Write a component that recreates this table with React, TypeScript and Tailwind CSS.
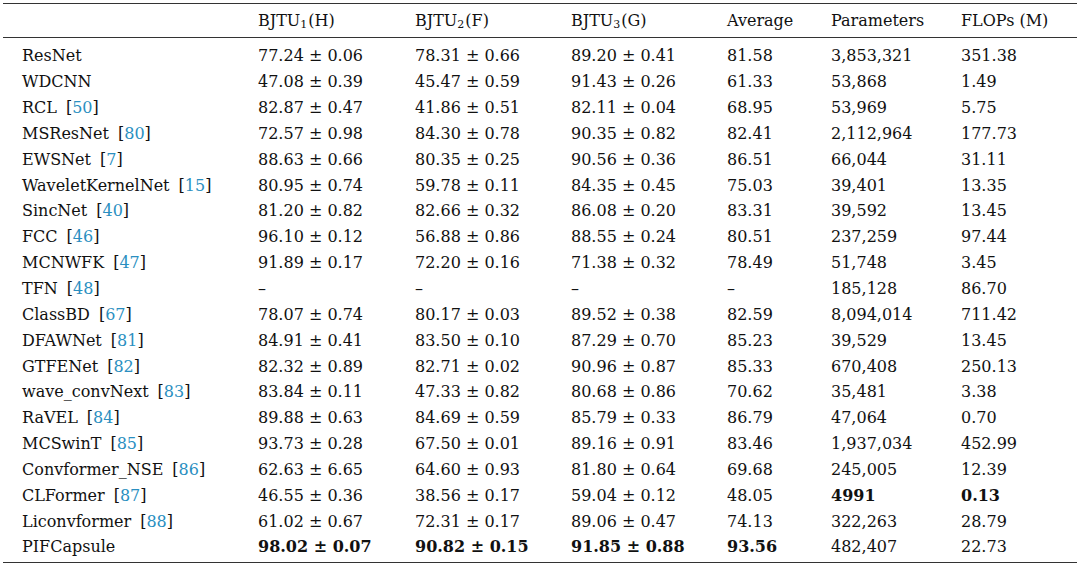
const rows: { name: string; ref?: string; cells: string[]; bold?: number[] }[] = [
  { name: 'ResNet', cells: ['77.24 ± 0.06', '78.31 ± 0.66', '89.20 ± 0.41', '81.58', '3,853,321', '351.38'] },
  { name: 'WDCNN', cells: ['47.08 ± 0.39', '45.47 ± 0.59', '91.43 ± 0.26', '61.33', '53,868', '1.49'] },
  { name: 'RCL', ref: '50', cells: ['82.87 ± 0.47', '41.86 ± 0.51', '82.11 ± 0.04', '68.95', '53,969', '5.75'] },
  { name: 'MSResNet', ref: '80', cells: ['72.57 ± 0.98', '84.30 ± 0.78', '90.35 ± 0.82', '82.41', '2,112,964', '177.73'] },
  { name: 'EWSNet', ref: '7', cells: ['88.63 ± 0.66', '80.35 ± 0.25', '90.56 ± 0.36', '86.51', '66,044', '31.11'] },
  { name: 'WaveletKernelNet', ref: '15', cells: ['80.95 ± 0.74', '59.78 ± 0.11', '84.35 ± 0.45', '75.03', '39,401', '13.35'] },
  { name: 'SincNet', ref: '40', cells: ['81.20 ± 0.82', '82.66 ± 0.32', '86.08 ± 0.20', '83.31', '39,592', '13.45'] },
  { name: 'FCC', ref: '46', cells: ['96.10 ± 0.12', '56.88 ± 0.86', '88.55 ± 0.24', '80.51', '237,259', '97.44'] },
  { name: 'MCNWFK', ref: '47', cells: ['91.89 ± 0.17', '72.20 ± 0.16', '71.38 ± 0.32', '78.49', '51,748', '3.45'] },
  { name: 'TFN', ref: '48', cells: ['–', '–', '–', '–', '185,128', '86.70'] },
  { name: 'ClassBD', ref: '67', cells: ['78.07 ± 0.74', '80.17 ± 0.03', '89.52 ± 0.38', '82.59', '8,094,014', '711.42'] },
  { name: 'DFAWNet', ref: '81', cells: ['84.91 ± 0.41', '83.50 ± 0.10', '87.29 ± 0.70', '85.23', '39,529', '13.45'] },
  { name: 'GTFENet', ref: '82', cells: ['82.32 ± 0.89', '82.71 ± 0.02', '90.96 ± 0.87', '85.33', '670,408', '250.13'] },
  { name: 'wave_convNext', ref: '83', cells: ['83.84 ± 0.11', '47.33 ± 0.82', '80.68 ± 0.86', '70.62', '35,481', '3.38'] },
  { name: 'RaVEL', ref: '84', cells: ['89.88 ± 0.63', '84.69 ± 0.59', '85.79 ± 0.33', '86.79', '47,064', '0.70'] },
  { name: 'MCSwinT', ref: '85', cells: ['93.73 ± 0.28', '67.50 ± 0.01', '89.16 ± 0.91', '83.46', '1,937,034', '452.99'] },
  { name: 'Convformer_NSE', ref: '86', cells: ['62.63 ± 6.65', '64.60 ± 0.93', '81.80 ± 0.64', '69.68', '245,005', '12.39'] },
  { name: 'CLFormer', ref: '87', cells: ['46.55 ± 0.36', '38.56 ± 0.17', '59.04 ± 0.12', '48.05', '4991', '0.13'], bold: [4, 5] },
  { name: 'Liconvformer', ref: '88', cells: ['61.02 ± 0.67', '72.31 ± 0.17', '89.06 ± 0.47', '74.13', '322,263', '28.79'] },
  { name: 'PIFCapsule', cells: ['98.02 ± 0.07', '90.82 ± 0.15', '91.85 ± 0.88', '93.56', '482,407', '22.73'], bold: [0, 1, 2, 3] },
]

const grid = 'grid grid-cols-[236px_157px_156px_156px_104px_130px_1fr] pl-[19px]'

function Bjtu({ n, k }: { n: string; k: string }) {
  return (
    <span>
      BJTU<sub className="text-[11px] relative top-[2px] mr-[1px]">{n}</sub>({k})
    </span>
  )
}

export default function App() {
  return (
    <div className="w-[1080px] h-[568px] bg-white pt-[3px] text-[16px] text-[#111] font-['DejaVu_Serif',serif]">
      <div className="mx-[3px] border-t-[1.5px] border-b-[1.5px] border-[#333]">
        <div className={`${grid} h-[34px] items-center border-b-[1.5px] border-[#333]`}>
          <div />
          <div><Bjtu n="1" k="H" /></div>
          <div><Bjtu n="2" k="F" /></div>
          <div><Bjtu n="3" k="G" /></div>
          <div>Average</div>
          <div>Parameters</div>
          <div>FLOPs (M)</div>
        </div>
        <div className="pt-[5.5px] pb-[1.5px]">
          {rows.map((r) => (
            <div key={r.name} className={`${grid} h-[25.85px] items-center leading-none`}>
              <div>
                {r.name}
                {r.ref && (
                  <span className="ml-[9px]">
                    [<span className="text-[#2a8fc1]">{r.ref}</span>]
                  </span>
                )}
              </div>
              {r.cells.map((c, i) => (
                <div key={i} className={r.bold?.includes(i) ? 'font-bold' : ''}>
                  {c}
                </div>
              ))}
            </div>
          ))}
        </div>
      </div>
    </div>
  )
}
